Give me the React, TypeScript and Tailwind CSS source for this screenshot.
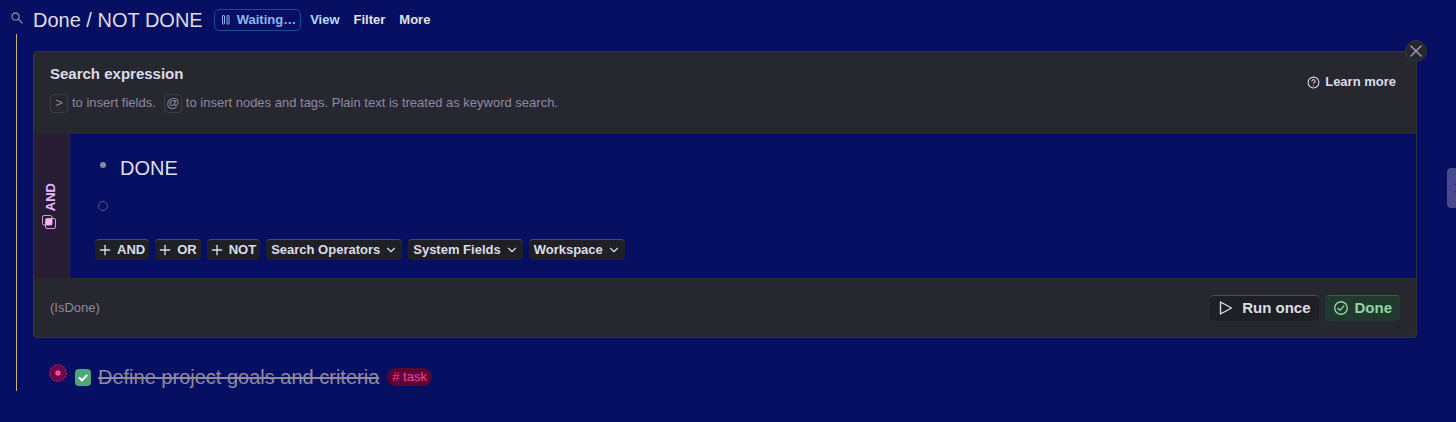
import React from 'react';
import { ChevronDown, CircleHelp, Plus } from 'lucide-react';

const insertButtons = ['AND', 'OR', 'NOT'];
const menuButtons = ['Search Operators', 'System Fields', 'Workspace'];

const chipClass =
  'flex h-[21px] items-center rounded-[4px] border-t border-[#4b4b58] bg-[#1f2025] text-[13px] font-bold text-[#dcdce8]';

function Key({ children }: { children: React.ReactNode }) {
  return (
    <kbd className="flex h-[19px] w-[18px] items-center justify-center rounded-[4px] border border-[#3d3d47] font-[inherit] text-[13px]">
      {children}
    </kbd>
  );
}

function SearchIcon() {
  return (
    <svg className="h-3 w-3" viewBox="0 0 12 12" fill="none" stroke="#85839b" strokeWidth="1.3" strokeLinecap="round">
      <circle cx="4.6" cy="4.6" r="3.6" />
      <path d="M7.3 7.3 11.2 11" />
    </svg>
  );
}

function PauseIcon() {
  return (
    <svg className="h-3 w-2" viewBox="0 0 8 12" fill="none" stroke="currentColor">
      <rect x="0.5" y="1.5" width="2" height="8.5" rx="0.5" />
      <rect x="5" y="1.5" width="2" height="8.5" rx="0.5" />
    </svg>
  );
}

function IntersectIcon() {
  return (
    <svg className="h-[14px] w-[14px]" viewBox="0 0 14 14" fill="none" stroke="#d59ae0">
      <rect x="0.5" y="0.5" width="9.5" height="9.5" rx="1.5" />
      <rect x="3.5" y="3.5" width="10" height="10" rx="1.5" />
      <rect x="4" y="4" width="6" height="6" fill="#f0b6fa" stroke="none" />
    </svg>
  );
}

function TitleBar() {
  return (
    <header className="flex h-10 items-center">
      <h1 className="text-[20px] leading-6 text-[#dedde2]">Done / NOT DONE</h1>
      <button className="ml-[11px] flex h-[22px] items-center gap-[7px] rounded-[5px] border border-[#1f48a2] pr-1 pl-[7px] text-[13px] font-bold text-[#8fb4ee]">
        <PauseIcon />
        Waiting…
      </button>
      <nav className="ml-[9px] flex gap-[14px] text-[13px] font-bold text-[#e4e0e4]">
        <button className="text-[#b4dcfb]">View</button>
        <button>Filter</button>
        <button>More</button>
      </nav>
    </header>
  );
}

function SearchPanel() {
  return (
    <section className="relative mt-[11px] rounded-[4px] border border-[#33353b] bg-[#27272f]">
      <button
        aria-label="Close"
        className="absolute -top-[12px] -right-[11px] flex h-[22px] w-[22px] items-center justify-center rounded-full border border-[#35353b] bg-[#27272d] text-[#9d9ab4]"
      >
        <svg className="h-3 w-3" viewBox="0 0 12 12" stroke="currentColor" strokeWidth="1.5" strokeLinecap="round">
          <path d="M1 1 11 11M11 1 1 11" />
        </svg>
      </button>

      <div className="flex h-[82px] items-start justify-between px-4 pt-[11px]">
        <div>
          <h2 className="text-[15px] leading-[22px] font-bold text-[#dcdce6]">Search expression</h2>
          <p className="mt-2 flex items-center gap-2 text-[13px] leading-5 text-[#8d89a5]">
            <span className="flex items-center gap-1">
              <Key>&gt;</Key>
              to insert fields.
            </span>
            <span className="flex items-center gap-1">
              <Key>@</Key>
              to insert nodes and tags. Plain text is treated as keyword search.
            </span>
          </p>
        </div>
        <a href="#learn" className="mt-[9px] mr-1 flex items-center gap-[5px] text-[13px] leading-5 font-bold text-[#dcdce8]">
          <CircleHelp className="h-[13px] w-[13px]" strokeWidth={2} />
          Learn more
        </a>
      </div>

      {/* Expression editor */}
      <div className="flex h-36 bg-[#070f62]">
        <div className="flex w-9 items-center justify-center border-r border-[#26243a] bg-[#261c34]">
          <div className="flex flex-col items-start gap-1 pr-px">
            <span className="rotate-180 text-[13px] leading-[18px] font-bold text-[#f0b6fa] [writing-mode:vertical-rl]">AND</span>
            <IntersectIcon />
          </div>
        </div>
        <div className="flex flex-col pt-5 pl-[25px]">
          <ul className="pl-1">
            <li className="flex h-7 items-center text-[20px] text-[#dedde2]">
              <span className="mr-[14px] mb-[6px] ml-px h-[6px] w-[6px] rounded-full bg-[#8b8897]" />
              DONE
            </li>
            <li className="mt-[10px] flex h-7 items-center">
              <span className="-ml-px h-[10px] w-[10px] rounded-full border border-[#55588b]" />
            </li>
          </ul>
          <div className="mt-[19px] flex gap-[6px]">
            {insertButtons.map((label) => (
              <button key={label} className={`${chipClass} gap-1 pr-1 pl-[2px]`}>
                <Plus className="h-4 w-4" strokeWidth={2} />
                {label}
              </button>
            ))}
            {menuButtons.map((label) => (
              <button key={label} aria-haspopup="menu" className={`${chipClass} gap-1 pr-1 pl-[5px]`}>
                {label}
                <ChevronDown className="h-[14px] w-[14px]" strokeWidth={2} />
              </button>
            ))}
          </div>
        </div>
      </div>

      <footer className="flex h-[59px] items-center justify-between px-4">
        <span className="text-[13px] text-[#8d89a5]">(IsDone)</span>
        <div className="flex gap-[6px] text-[15px] font-bold">
          <button className="flex h-[26px] items-center gap-2 rounded-[4px] border-t border-[#4b4b58] bg-[#1f2025] px-2 text-[#dcdce8]">
            <svg className="h-4 w-4" viewBox="0 0 16 16" fill="none" stroke="currentColor" strokeWidth="1.4" strokeLinejoin="round">
              <path d="M2.5 2 13.5 8 2.5 14Z" />
            </svg>
            Run once
          </button>
          <button className="flex h-[26px] items-center gap-[6px] rounded-[4px] border-t border-[#2f6048] bg-[#213a2f] px-2 text-[#90d5a0]">
            <svg className="h-4 w-4" viewBox="0 0 16 16" fill="none" stroke="currentColor" strokeWidth="1.4" strokeLinecap="round" strokeLinejoin="round">
              <circle cx="8" cy="8" r="6.3" />
              <path d="M5 8.5 7 10.3 11 5.9" />
            </svg>
            Done
          </button>
        </div>
      </footer>
    </section>
  );
}

function TaskRow() {
  return (
    <div className="mt-[25px] flex h-7 items-center pl-4">
      <svg className="mb-2 h-[18px] w-[18px]" viewBox="0 0 18 18">
        <circle cx="9" cy="9" r="8.3" fill="#680a44" stroke="#d81c7c" strokeDasharray="2 1.2" />
        <circle cx="9" cy="9" r="2.7" fill="#ff47ad" />
      </svg>
      <label className="flex items-center">
        <span className="relative ml-2 flex h-[17px] w-4 items-center">
          <input type="checkbox" defaultChecked className="h-[17px] w-4 appearance-none rounded-[4px] bg-[#50a775]" />
          <svg className="pointer-events-none absolute inset-0 h-[17px] w-4" viewBox="0 0 16 17" fill="none" stroke="white" strokeWidth="2">
            <path d="M4 8.5 7 11.3 12.2 6" />
          </svg>
        </span>
        <span className="ml-[7px] text-[20px] leading-6 text-[#8f8a9c] line-through">Define project goals and criteria</span>
      </label>
      <a href="#task" className="ml-2 flex h-[18px] items-center rounded-full bg-[#5a0631] px-[5px] text-[13px] text-[#ff3ba6]">
        # task
      </a>
    </div>
  );
}

export default function App() {
  return (
    <div className="relative flex min-h-screen bg-[#070f62] pr-[39px] pb-8 font-['Liberation_Sans',Arial,sans-serif]">
      <div className="flex w-[33px] shrink-0 flex-col items-center pt-3">
        <SearchIcon />
        <div className="mt-[10px] w-px grow bg-[#c9b27a]" />
      </div>
      <main className="min-w-0 grow">
        <TitleBar />
        <SearchPanel />
        <TaskRow />
      </main>

      {/* Side panel handle */}
      <button
        aria-label="Open side panel"
        className="absolute top-[168px] right-0 flex h-10 w-[9px] flex-col items-end justify-center gap-[6px] rounded-l-[4px] bg-[#474a8f]"
      >
        <span className="h-[2px] w-[2px] bg-[#2439a6]" />
        <span className="h-[2px] w-[2px] bg-[#2439a6]" />
      </button>
    </div>
  );
}
